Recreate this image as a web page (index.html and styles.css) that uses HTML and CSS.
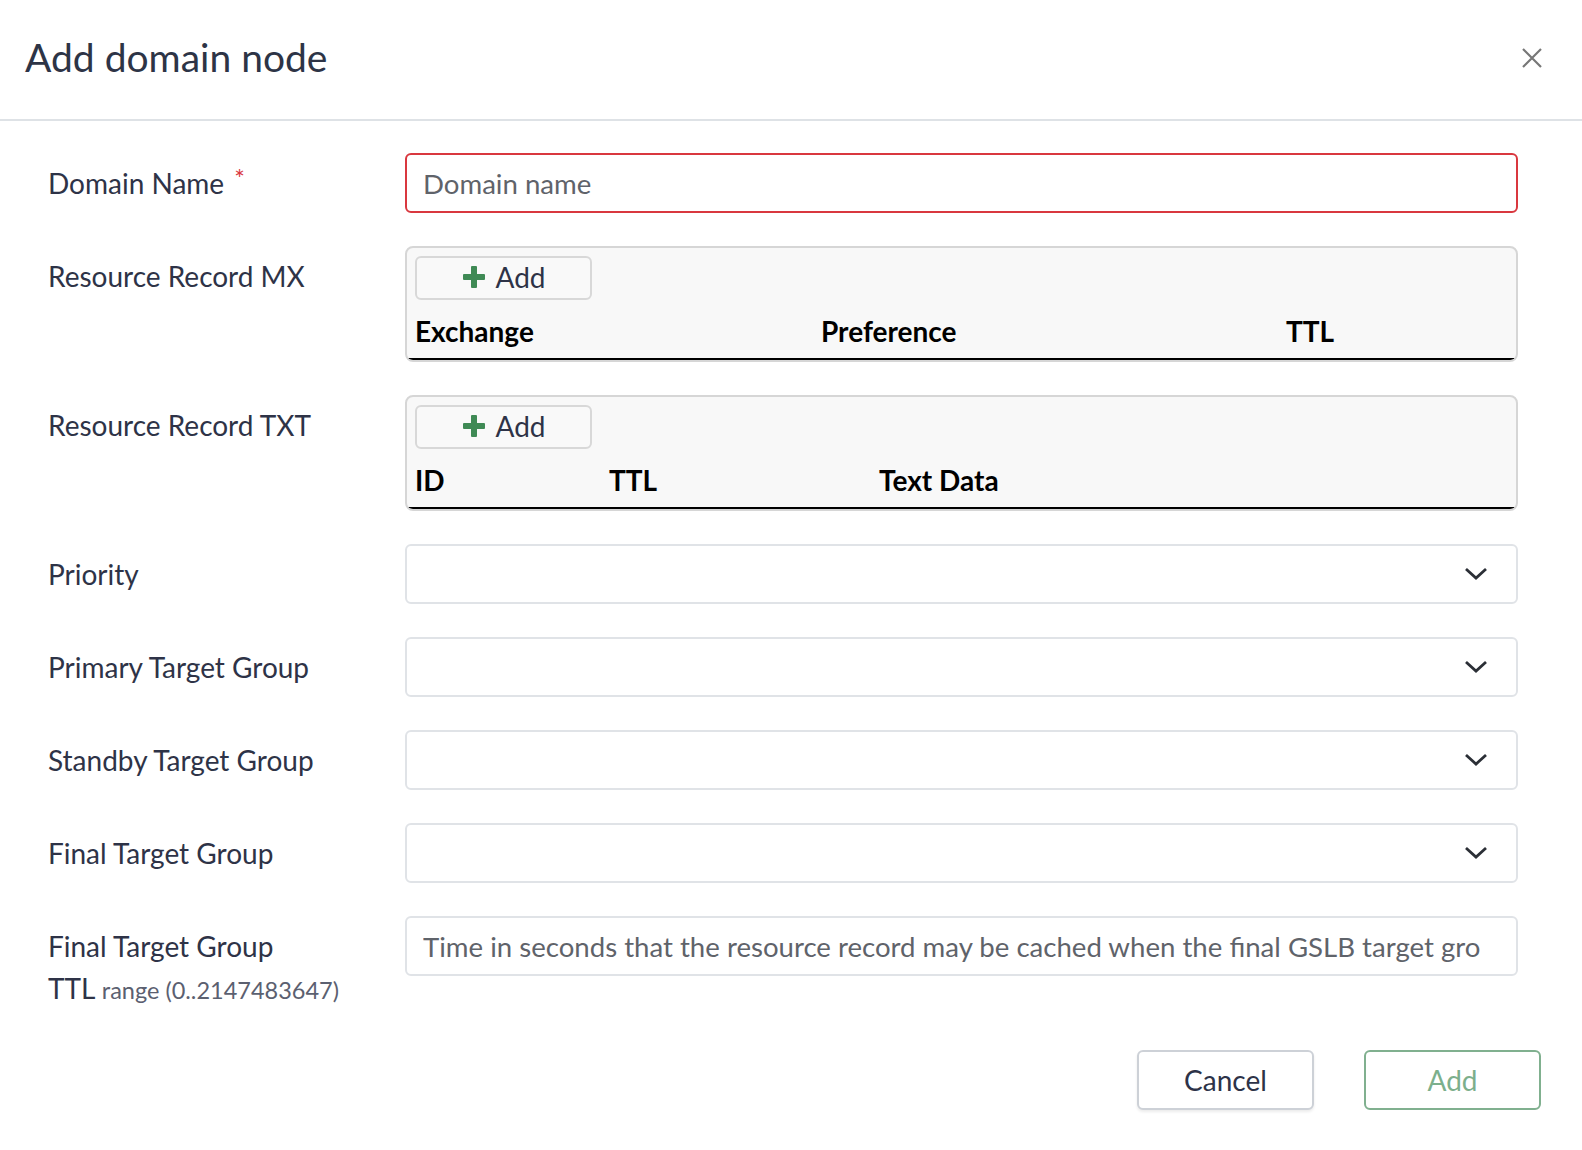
FILE: index.html
```html
<!DOCTYPE html>
<html lang="en">
<head>
<meta charset="utf-8">
<title>Add domain node</title>
<link rel="stylesheet" href="styles.css">
</head>
<body>
<div class="modal">
  <header class="modal-header">
    <h1 class="modal-title">Add domain node</h1>
    <button class="close" aria-label="Close">
      <svg width="22" height="22" viewBox="0 0 22 22"><path d="M2 2 L20 20 M20 2 L2 20" stroke="#777" stroke-width="2.2" fill="none"/></svg>
    </button>
  </header>
  <form class="form">
    <div class="row">
      <label class="label">Domain Name <span class="req">*</span></label>
      <div class="field"><input class="input invalid" type="text" placeholder="Domain name"></div>
    </div>
    <div class="row">
      <label class="label">Resource Record MX</label>
      <div class="field">
        <div class="box">
          <button type="button" class="add-btn"><span class="plus"></span>Add</button>
          <table class="tbl">
            <thead><tr><th class="c-ex">Exchange</th><th class="c-pref">Preference</th><th>TTL</th></tr></thead>
          </table>
        </div>
      </div>
    </div>
    <div class="row">
      <label class="label">Resource Record TXT</label>
      <div class="field">
        <div class="box">
          <button type="button" class="add-btn"><span class="plus"></span>Add</button>
          <table class="tbl">
            <thead><tr><th class="c-id">ID</th><th class="c-ttl">TTL</th><th>Text Data</th></tr></thead>
          </table>
        </div>
      </div>
    </div>
    <div class="row">
      <label class="label">Priority</label>
      <div class="field"><div class="select"><svg class="chev" width="24" height="14" viewBox="0 0 24 14"><path d="M2 2 L12 11 L22 2" stroke="#2b2f36" stroke-width="2.8" fill="none"/></svg></div></div>
    </div>
    <div class="row">
      <label class="label">Primary Target Group</label>
      <div class="field"><div class="select"><svg class="chev" width="24" height="14" viewBox="0 0 24 14"><path d="M2 2 L12 11 L22 2" stroke="#2b2f36" stroke-width="2.8" fill="none"/></svg></div></div>
    </div>
    <div class="row">
      <label class="label">Standby Target Group</label>
      <div class="field"><div class="select"><svg class="chev" width="24" height="14" viewBox="0 0 24 14"><path d="M2 2 L12 11 L22 2" stroke="#2b2f36" stroke-width="2.8" fill="none"/></svg></div></div>
    </div>
    <div class="row">
      <label class="label">Final Target Group</label>
      <div class="field"><div class="select"><svg class="chev" width="24" height="14" viewBox="0 0 24 14"><path d="M2 2 L12 11 L22 2" stroke="#2b2f36" stroke-width="2.8" fill="none"/></svg></div></div>
    </div>
    <div class="row">
      <label class="label">Final Target Group<br>TTL <span class="hint">range (0..2147483647)</span></label>
      <div class="field"><input class="input input-long" type="text" placeholder="Time in seconds that the resource record may be cached when the final GSLB target group is used"></div>
    </div>
  </form>
  <footer class="footer">
    <button type="button" class="btn btn-cancel">Cancel</button>
    <button type="button" class="btn btn-add">Add</button>
  </footer>
</div>
</body>
</html>
```
FILE: styles.css
```css
* { box-sizing: border-box; }
html, body { margin: 0; padding: 0; background: #fff; }
body {
  font-family: Lato, "Open Sans", sans-serif;
  color: #2e3347;
  width: 1582px;
  height: 1150px;
  overflow: hidden;
}
.modal-header {
  height: 121px;
  border-bottom: 2px solid #dee2e6;
  display: flex;
  align-items: center;
  justify-content: space-between;
  padding: 0 39px 4px 25px;
}
.modal-title {
  margin: 0;
  font-size: 39px;
  font-weight: 400;
  color: #2d3446;
  line-height: 1.2;
}
.close {
  border: 0;
  background: none;
  padding: 0;
  width: 22px;
  height: 22px;
  display: flex;
}
.form {
  padding: 32px 64px 0 48px;
  display: flex;
  flex-direction: column;
  gap: 33px;
}
.row {
  display: flex;
  align-items: flex-start;
}
.label {
  width: 357px;
  flex: none;
  font-size: 28px;
  line-height: 42px;
  padding-top: 9px;
  color: #2e3347;
}
.req {
  position: relative;
  top: -6px;
  color: #d9383f;
  font-size: 25px;
  margin-left: 3px;
}
.hint { font-size: 23.5px; color: #5b6070; }
.field { flex: 1; min-width: 0; }
.input {
  display: block;
  width: 100%;
  height: 60px;
  border: 2px solid #e0e3e7;
  border-radius: 6px;
  padding: 0 16px;
  font-family: Lato, sans-serif;
  font-size: 27.6px;
  color: #2e3347;
  background: #fff;
  outline: none;
}
.input-long { padding-right: 35px; }
.input::placeholder { color: #5f636a; opacity: 1; }
.input.invalid { border-color: #d9383f; }
.box {
  background: #f8f8f8;
  border: 2px solid #d6d6d6;
  border-radius: 8px;
  padding-top: 8px;
  overflow: hidden;
}
.add-btn {
  display: flex;
  align-items: center;
  justify-content: center;
  gap: 10px;
  margin-left: 8px;
  width: 177px;
  height: 44px;
  border: 2px solid #d8d8d8;
  border-radius: 6px;
  background: #f9f9f9;
  font-family: Lato, sans-serif;
  font-size: 28px;
  color: #2e3347;
  padding: 0 0 2px 2px;
}
.plus {
  position: relative;
  width: 22px;
  height: 22px;
  flex: none;
}
.plus::before, .plus::after {
  content: "";
  position: absolute;
  background: #3f8a55;
  border-radius: 1px;
}
.plus::before { left: 0; top: 8px; width: 22px; height: 6px; }
.plus::after { left: 8px; top: 0; width: 6px; height: 22px; }
.tbl {
  width: 100%;
  border-collapse: collapse;
  table-layout: fixed;
}
.tbl th {
  text-align: left;
  font-size: 28px;
  font-weight: 700;
  color: #000;
  padding: 4px 0 0 8px;
  line-height: 54px;
  border-bottom: 2px solid #000;
}
.c-ex { width: 406px; }
.c-pref { width: 465px; }
.c-id { width: 194px; }
.c-ttl { width: 270px; }
.select {
  height: 60px;
  border: 2px solid #e0e3e7;
  border-radius: 6px;
  background: #fff;
  display: flex;
  align-items: center;
  justify-content: flex-end;
  padding-right: 28px;
}
.footer {
  display: flex;
  justify-content: flex-end;
  gap: 50px;
  padding: 39px 41px 0 0;
}
.btn {
  width: 177px;
  height: 60px;
  border-radius: 6px;
  background: #fff;
  font-family: Lato, sans-serif;
  font-size: 28px;
}
.btn-cancel {
  border: 2px solid #cdd1d7;
  color: #2d3348;
  box-shadow: 0 2px 3px rgba(0,0,0,0.08);
}
.btn-add {
  border: 2px solid #80b08f;
  color: #7caf8c;
}
```
